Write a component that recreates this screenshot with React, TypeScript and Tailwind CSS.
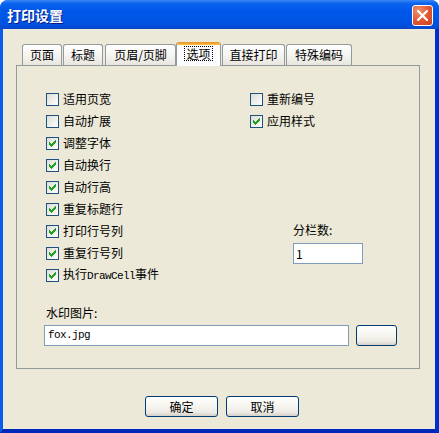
import React from "react";

const CJK = "font-['Noto_Sans_CJK_SC',sans-serif]";
const MONO = "font-['Liberation_Mono',monospace] text-[11px] tracking-[-0.6px]";

function Check({ checked }: { checked: boolean }) {
  return (
    <span className="w-[13px] h-[13px] shrink-0 border border-[#1C5180] bg-[linear-gradient(135deg,#DCDCD7,#FFFFFF)] flex items-start justify-start pl-[2px] pt-[2px]">
      {checked && (
        <svg width="7" height="7" viewBox="0 0 7 7" shapeRendering="crispEdges">
          <path
            fill="#21A121"
            d="M0 2h1v3h-1z M1 3h1v3h-1z M2 4h1v3h-1z M3 3h1v3h-1z M4 2h1v3h-1z M5 1h1v3h-1z M6 0h1v3h-1z"
          />
        </svg>
      )}
    </span>
  );
}

function Row({ checked, children }: { checked: boolean; children: React.ReactNode }) {
  return (
    <div className="h-[22px] flex items-center">
      <Check checked={checked} />
      <span className="ml-[4px] text-[12px] leading-[16px] text-black whitespace-nowrap">{children}</span>
    </div>
  );
}

function Tab({ label, w, ml }: { label: string; w: string; ml: string }) {
  return (
    <div
      className={`${w} ${ml} h-[21px] border border-b-0 border-[#919B9C] rounded-t-[3px] bg-[linear-gradient(to_bottom,#FFFFFF,#F3F2EE_60%,#E8E6DE)] flex items-center justify-center text-[12px] leading-[16px] text-black`}
    >
      {label}
    </div>
  );
}

function XPButton({ w, children }: { w: string; children?: React.ReactNode }) {
  return (
    <div
      className={`${w} h-[21px] border border-[#003C74] rounded-[3px] bg-[linear-gradient(to_bottom,#FFFFFF,#F5F4EF_50%,#ECEBE6_80%,#D6D0C5)] flex items-center justify-center text-[12px] leading-[16px] text-black`}
    >
      {children}
    </div>
  );
}

export default function App() {
  return (
    <div className={`w-[439px] h-[433px] bg-white ${CJK}`}>
      <div className="w-[439px] h-[433px] flex flex-col rounded-t-[8px] overflow-hidden bg-[#0055E5]">
        {/* Title bar */}
        <div className="h-[29px] shrink-0 flex items-center pl-[7px] pr-[6px] bg-[linear-gradient(to_bottom,#3A88F6_0%,#0A64EE_12%,#0058E8_35%,#0055E5_65%,#0050DD_88%,#0A45C8_100%)]">
          <span className="text-white font-bold text-[14px] leading-[18px] [text-shadow:1px_1px_0_#0A1A8A]">
            打印设置
          </span>
          <div className="ml-auto self-start mt-[5px] w-[21px] h-[21px] rounded-[3px] border border-white bg-[radial-gradient(circle_at_30%_25%,#F0906E,#E0552F_55%,#C8401E)] flex items-center justify-center">
            <svg width="11" height="11" viewBox="0 0 11 11">
              <path d="M1 1 L10 10 M10 1 L1 10" stroke="white" strokeWidth="2.2" strokeLinecap="square" />
            </svg>
          </div>
        </div>

        {/* Body */}
        <div className="flex-1 flex flex-col bg-[#ECE9D8] border-l-[3px] border-r-[4px] border-b-[4px] border-l-[#0A5DEB] border-r-[#0030CC] border-b-[#0028B8] pl-[13px] pt-[13px]">
          {/* Tabs */}
          <div className="h-[23px] flex items-end pl-[6px]">
            <Tab label="页面" w="w-[40px]" ml="ml-0" />
            <Tab label="标题" w="w-[40px]" ml="ml-[1px]" />
            <Tab label="页眉/页脚" w="w-[71px]" ml="ml-[2px]" />
            <div className="relative z-10 w-[45px] h-[24px] mb-[-1px] border-l border-r border-[#919B9C] rounded-t-[3px] overflow-hidden bg-[#FCFCFE] flex flex-col">
              <div className="h-[3px] shrink-0 bg-[linear-gradient(to_bottom,#E68B2C,#FFC73C)]" />
              <div className="flex-1 flex items-start justify-center pt-[1px]">
                <span className="border border-dotted border-black px-[1px] text-[12px] leading-[13px] text-black">
                  选项
                </span>
              </div>
            </div>
            <Tab label="直接打印" w="w-[63px]" ml="ml-[1px]" />
            <Tab label="特殊编码" w="w-[66px]" ml="ml-[1px]" />
          </div>

          {/* Panel */}
          <div className="w-[404px] h-[304px] border border-[#919B9C] bg-[#ECE9D8] pl-[29px] pt-[22px] flex flex-col">
            <div className="flex">
              <div className="w-[204px] flex flex-col">
                <Row checked={false}>适用页宽</Row>
                <Row checked={false}>自动扩展</Row>
                <Row checked={true}>调整字体</Row>
                <Row checked={true}>自动换行</Row>
                <Row checked={true}>自动行高</Row>
                <Row checked={true}>重复标题行</Row>
                <Row checked={true}>打印行号列</Row>
                <Row checked={true}>重复行号列</Row>
                <Row checked={true}>
                  执行<span className={MONO}>DrawCell</span>事件
                </Row>
              </div>
              <div className="flex flex-col">
                <Row checked={false}>重新编号</Row>
                <Row checked={true}>应用样式</Row>
                <div className="mt-[90px] ml-[43px] flex flex-col">
                  <div className="h-[16px] text-[12px] leading-[16px] text-black">分栏数:</div>
                  <div className="mt-[5px] w-[70px] h-[21px] border border-[#7F9DB9] bg-white pl-[2px] flex items-center text-[12px] leading-[16px] text-black">
                    1
                  </div>
                </div>
              </div>
            </div>
            <div className="mt-[19px] h-[16px] text-[12px] leading-[16px] text-black">水印图片:</div>
            <div className="mt-[4px] ml-[-2px] flex">
              <div className="w-[305px] h-[21px] border border-[#7F9DB9] bg-white pl-[3px] flex items-center text-black">
                <span className={MONO}>fox.jpg</span>
              </div>
              <div className="ml-[7px]">
                <XPButton w="w-[41px]" />
              </div>
            </div>
          </div>

          {/* Buttons */}
          <div className="mt-[27px] ml-[129px] flex gap-[8px]">
            <XPButton w="w-[73px]">确定</XPButton>
            <XPButton w="w-[73px]">取消</XPButton>
          </div>
        </div>
      </div>
    </div>
  );
}
